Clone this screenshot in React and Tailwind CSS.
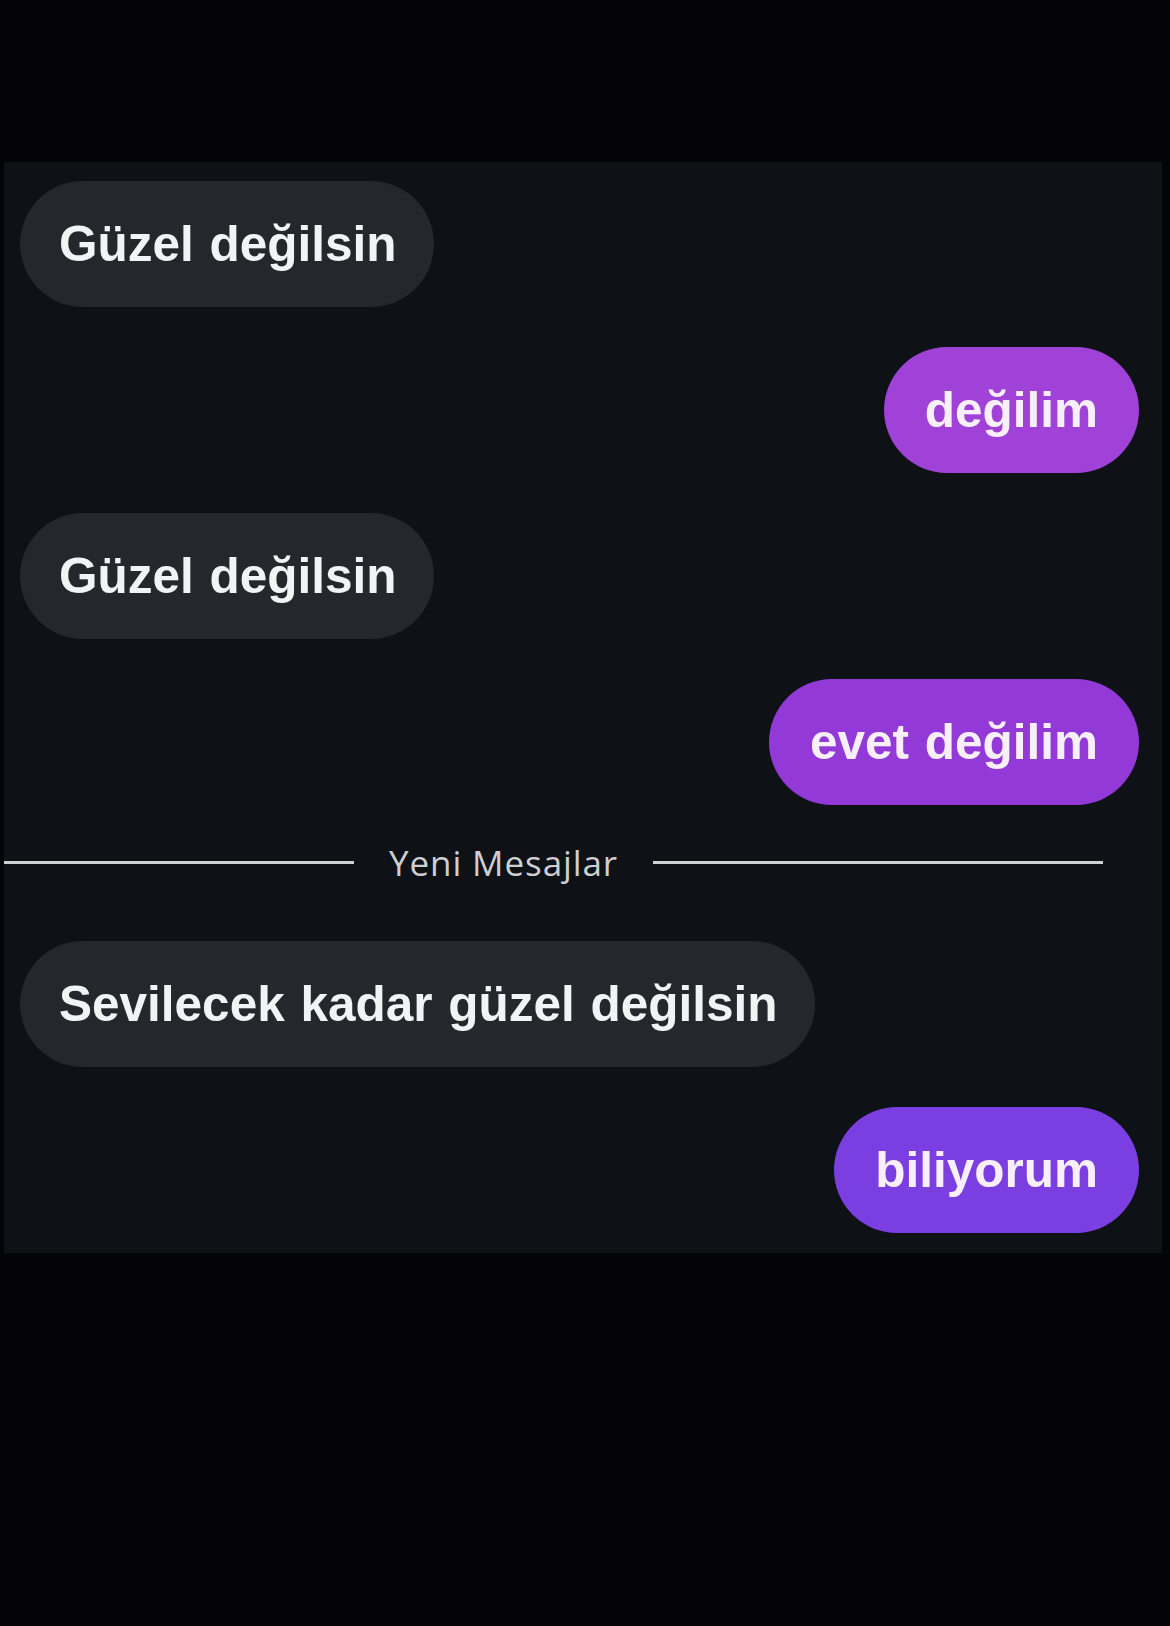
import React from "react";

const messages = [
  { id: 1, mine: false, text: "Güzel değilsin" },
  { id: 2, mine: true, text: "değilim", tone: "bg-[#a042d8]" },
  { id: 3, mine: false, text: "Güzel değilsin" },
  { id: 4, mine: true, text: "evet değilim", tone: "bg-[#9239d8]" },
];

const newMessages = [
  { id: 5, mine: false, text: "Sevilecek kadar güzel değilsin" },
  { id: 6, mine: true, text: "biliyorum", tone: "bg-[#7b3fe1]" },
];

function Bubble({ msg }) {
  return (
    <div className={`flex ${msg.mine ? "justify-end pr-[23px]" : "justify-start pl-[16px]"}`}>
      <div
        className={`h-[126px] flex items-center rounded-full text-[49.5px] font-bold whitespace-nowrap [word-spacing:2px] ${
          msg.mine
            ? `${msg.tone} px-[41px] text-[#f7f0fb]`
            : "bg-[#25272c] pl-[39px] pr-[37px] text-[#f2f3f4]"
        }`}
      >
        {msg.text}
      </div>
    </div>
  );
}

export default function App() {
  return (
    <div
      className="w-[1170px] h-[1626px] bg-[#040306] pt-[162px]"
      style={{ fontFamily: '"Liberation Sans", Arial, sans-serif' }}
    >
      <div className="ml-[4px] w-[1158px] bg-[#0e1116] pt-[19px] pb-[20px] flex flex-col">
        <div className="flex flex-col gap-[40px]">
          {messages.map((m) => (
            <Bubble key={m.id} msg={m} />
          ))}
        </div>

        {/* new messages divider */}
        <div className="flex items-center h-[44px] mt-[35px] mb-[57px]">
          <div className="w-[350px] h-[3px] bg-[#cfd0d2]" />
          <span
            className="mx-[35px] text-[35px] tracking-[0.9px] text-[#cdcfd2] leading-none"
            style={{ fontFamily: '"Open Sans", "Noto Sans", sans-serif' }}
          >
            Yeni Mesajlar
          </span>
          <div className="w-[450px] h-[3px] bg-[#cfd0d2]" />
        </div>

        <div className="flex flex-col gap-[40px]">
          {newMessages.map((m) => (
            <Bubble key={m.id} msg={m} />
          ))}
        </div>
      </div>
    </div>
  );
}
